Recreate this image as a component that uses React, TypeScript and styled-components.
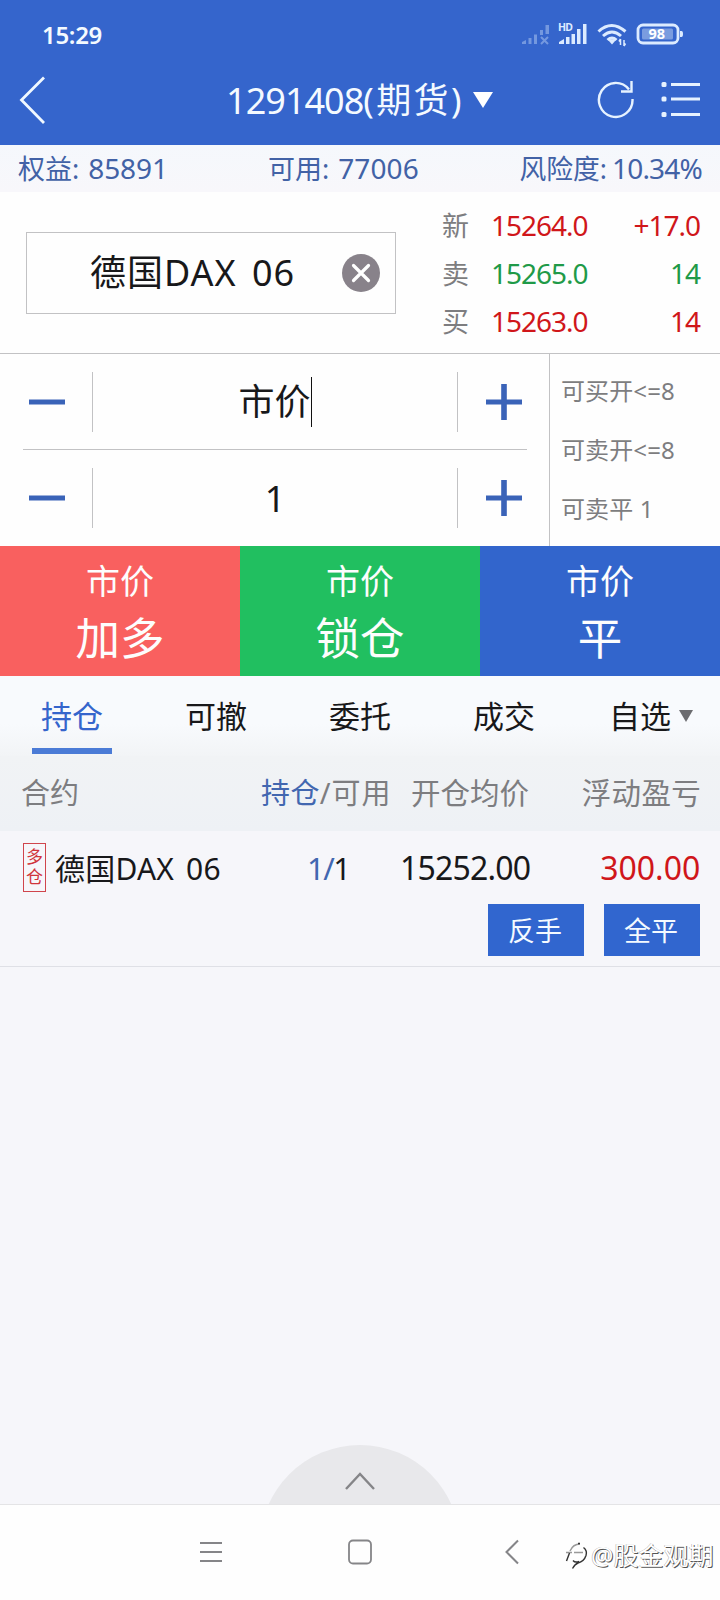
import React from "react";
import styled, { createGlobalStyle } from "styled-components";

const BLUE = "#3565cc";
const RED = "#d0161a";
const GREEN = "#1f9a48";
const GRAY = "#7d7d80";
const LINE = "#c2c2c4";

const GlobalStyle = createGlobalStyle`
  * { box-sizing: border-box; }
  body { margin: 0; background: #f6f6fa; }
`;

const Screen = styled.main`
  width: 720px;
  height: 1600px;
  display: flex;
  flex-direction: column;
  overflow: hidden;
  background: #f6f6fa;
  color: #18181a;
  font-family: "Noto Sans", "Noto Sans CJK SC", sans-serif;
  white-space: nowrap;
`;

const Txt = styled.span<{ $size: number; $track?: number; $word?: number; $color?: string; $weight?: number }>`
  font-size: ${(p) => p.$size}px;
  line-height: ${(p) => Math.round(p.$size * 1.3)}px;
  letter-spacing: ${(p) => p.$track ?? 0}px;
  word-spacing: ${(p) => p.$word ?? 0}px;
  color: ${(p) => p.$color ?? "inherit"};
  font-weight: ${(p) => p.$weight ?? 400};
`;

const Header = styled.header`
  height: 145px;
  background: ${BLUE};
  color: #f4faff;
  flex: none;
`;

const StatusBar = styled.div`
  height: 70px;
  padding: 0 37px 2px 42px;
  display: flex;
  align-items: center;
  justify-content: space-between;
`;

const TitleBar = styled.div`
  height: 60px;
  padding: 0 19px 0 18px;
  display: grid;
  grid-template-columns: 118px 1fr 118px;
  align-items: center;
`;

const Title = styled.h1`
  margin: 0;
  font-weight: 400;
  display: flex;
  align-items: center;
  justify-content: center;
`;

const HeaderTools = styled.div`
  display: flex;
  align-items: center;
  justify-content: flex-end;
  gap: 26px;
`;

const AccountBar = styled.section`
  height: 47px;
  flex: none;
  padding: 0 18px 1px 18px;
  display: grid;
  grid-template-columns: 250px 250px 1fr;
  align-items: center;
  color: #4262a6;
  background: linear-gradient(#f5f8fc, #f8f7fb);
`;

const Figure = styled.div<{ $gap: number; $end?: boolean }>`
  display: flex;
  align-items: center;
  justify-content: ${(p) => (p.$end ? "flex-end" : "flex-start")};
  gap: ${(p) => p.$gap}px;
`;

const QuotePanel = styled.section`
  height: 162px;
  flex: none;
  display: flex;
  align-items: center;
  padding: 0 20px 0 26px;
  background: #fefefe;
  border-bottom: 1px solid ${LINE};
`;

const ContractField = styled.div`
  width: 370px;
  height: 82px;
  padding: 0 15px 0 63px;
  border: 1px solid ${LINE};
  display: flex;
  align-items: center;
  justify-content: space-between;
`;

const QuoteList = styled.div`
  flex: 1;
  margin-left: 46px;
  padding-top: 1px;
  display: grid;
  grid-template-rows: repeat(3, 48px);
`;

const QuoteRow = styled.div<{ $color: string }>`
  display: grid;
  grid-template-columns: 49px 1fr auto;
  align-items: center;
  color: ${(p) => p.$color};
`;

const EntryPanel = styled.section`
  height: 192px;
  flex: none;
  display: flex;
  background: #fefefe;
`;

const Steppers = styled.div`
  width: 549px;
  padding: 0 22px 0 23px;
`;

const Stepper = styled.div`
  height: 96px;
  display: grid;
  grid-template-columns: 69px 1fr 69px;
  align-items: center;
  border-bottom: 1px solid ${LINE};
  & + & { border-bottom: 0; }
`;

const StepValue = styled.div`
  height: 60px;
  border: solid ${LINE};
  border-width: 0 1px;
  display: flex;
  align-items: center;
  justify-content: center;
`;

const Caret = styled.i`
  width: 1px;
  height: 50px;
  background: #111;
`;

const StepButton = styled.button<{ $right?: boolean }>`
  border: 0;
  padding: 0;
  background: none;
  height: 40px;
  display: flex;
  align-items: center;
  justify-content: ${(p) => (p.$right ? "flex-end" : "flex-start")};
  padding-left: ${(p) => (p.$right ? 0 : 6)}px;
  padding-right: ${(p) => (p.$right ? 5 : 0)}px;
`;

const Limits = styled.div`
  flex: 1;
  border-left: 1px solid ${LINE};
  padding: 7px 0 0 11px;
  display: grid;
  grid-template-rows: repeat(3, 59px);
  align-items: center;
`;

const Actions = styled.section`
  height: 130px;
  flex: none;
  display: grid;
  grid-template-columns: repeat(3, 1fr);
`;

const ActionButton = styled.button<{ $bg: string }>`
  border: 0;
  padding: 13px 0 0;
  background: ${(p) => p.$bg};
  color: #fdfdfd;
  font-family: inherit;
  display: flex;
  flex-direction: column;
  align-items: center;
  justify-content: flex-start;
  gap: 6px;
`;

const Tabs = styled.nav`
  height: 80px;
  flex: none;
  display: grid;
  grid-template-columns: repeat(5, 144px);
  background: linear-gradient(#f8fafd 60%, #f2f4f6);
`;

const Tab = styled.div<{ $active?: boolean }>`
  padding-top: 20px;
  display: flex;
  flex-direction: column;
  align-items: center;
  justify-content: space-between;
  color: ${(p) => (p.$active ? BLUE : "inherit")};
`;

const TabLabel = styled.div`
  display: flex;
  align-items: center;
  gap: 8px;
  padding-left: 6px;
`;

const Underline = styled.i`
  width: 80px;
  height: 6px;
  margin-bottom: 2px;
  background: #4b7bd6;
`;

const TableHead = styled.div`
  height: 75px;
  flex: none;
  display: grid;
  grid-template-columns: 240px 150px 117px 1fr;
  padding: 0 19px 1px 21px;
  align-items: center;
  color: ${GRAY};
  background: linear-gradient(#f1f3f5, #eef1f5);
`;

const Cell = styled.div<{ $end?: boolean }>`
  display: flex;
  align-items: center;
  justify-content: ${(p) => (p.$end ? "flex-end" : "flex-start")};
`;

const Position = styled.section`
  height: 136px;
  flex: none;
  padding: 8px 20px 0 23px;
  border-bottom: 1px solid #dfe0e6;
  background: #f6f6fa;
`;

const PositionLine = styled.div`
  height: 58px;
  display: grid;
  grid-template-columns: 32px 252px 93px 1fr 170px;
  align-items: center;
`;

const SideBadge = styled.div`
  width: 23px;
  height: 49px;
  margin-top: -2px;
  border: 1px solid #d0454c;
  color: #d0343b;
  display: flex;
  flex-direction: column;
  align-items: center;
  justify-content: center;
`;

const BadgeChar = styled.span`
  font-size: 17px;
  line-height: 20px;
`;

const RowActions = styled.div`
  margin-top: 7px;
  display: flex;
  justify-content: flex-end;
  gap: 20px;
`;

const RowButton = styled.button`
  width: 96px;
  height: 52px;
  border: 0;
  padding: 1px 2px 0 0;
  background: #3166cf;
  color: #f4faff;
  font-family: inherit;
`;

const Empty = styled.section`
  flex: 1;
  display: flex;
  align-items: flex-end;
  justify-content: center;
`;

const Drawer = styled.div`
  width: 188px;
  height: 59px;
  display: flex;
`;

const NavBar = styled.footer`
  height: 96px;
  flex: none;
  border-top: 1px solid #e4e4e6;
  background: #fefefe;
  padding: 34px 0 0 200px;
  display: grid;
  grid-template-columns: 148px 156px 61px 1fr;
  align-items: start;
`;

const Watermark = styled.div`
  display: flex;
  align-items: center;
  gap: 2px;
  color: #fff;
  text-shadow: 1px 1px 0 #555, -0.5px -0.5px 0 #aaa;
`;

const SignalIcons = () => (
  <svg width="163" height="30" viewBox="520 20 163 30" fill="#dcebff">
    <g opacity=".38">
      <path d="M522 45v-2l4-2v4zM528.5 39h3v6h-3zM534 35.500h3V45h-3zM540 31h3v5h-3zM545.500 26h3.500v9h-3.500z" />
      <path d="m541 38 7 7m0-7-7 7" stroke="#dcebff" strokeWidth="2" />
    </g>
    <text x="558" y="31.500" fontSize="10.500" fontWeight="700" fontFamily="Noto Sans" textLength="15">HD</text>
    <path d="M559 45v-2l5-3v5zM566 38h3.500v7H566zM571.500 35h3.500v10h-3.500zM577 30h3.500v15H577zM583 25h3.500v20H583z" />
    <g fill="none" stroke="#dcebff" strokeWidth="3">
      <path d="M598.500 32.500q13-12 27 0M603 37q9-8 18 0M607.500 41q4.500-4 9 0" />
    </g>
    <path d="m608.500 41.500 3.500 4 3.500-4q-3.500-2.500-7 0z" />
    <path d="M620.500 40v6m0-6-1.500 2.500M624 41v6m0 0 1.500-2.500" stroke="#dcebff" strokeWidth="1.500" fill="none" />
    <rect x="638" y="26" width="40" height="18" rx="5" fill="none" stroke="#dcebff" strokeWidth="2.800" />
    <rect x="642" y="29.500" width="31" height="11" rx="1.500" fill="#7a9cdf" />
    <path d="M680 32h1.500q1.500 0 1.500 3t-1.500 3H680z" />
    <text x="648.500" y="40" fontSize="14.500" fontWeight="700" fontFamily="Noto Sans" fill="#fff">98</text>
  </svg>
);

const BackIcon = () => (
  <svg width="28" height="50" viewBox="0 0 28 50" fill="none" stroke="#f0f8ff" strokeWidth="2.800">
    <path d="M26 2.500 3.500 25 26 48" />
  </svg>
);

const RefreshIcon = () => (
  <svg width="38" height="40" viewBox="596 80 38 40" fill="none" stroke="#e6f2ff" strokeWidth="2.400">
    <path d="M631.500 99A16.800 17 0 1 1 628 89.500" />
    <path d="M630.500 81v10.500H620" />
  </svg>
);

const ListIcon = () => (
  <svg width="40" height="40" viewBox="661 80 40 40" fill="#e6f2ff">
    {[82.500, 97, 112.500].map((y) => (
      <g key={y}>
        <rect x="661.500" y={y - 0.500} width="5" height="5" rx="1.500" />
        <rect x="671" y={y + 0.500} width="29" height="3" />
      </g>
    ))}
  </svg>
);

const Triangle = styled.i<{ $w: number; $h: number; $color: string; $space?: number }>`
  margin-left: ${(p) => p.$space ?? 0}px;
  border: solid transparent;
  border-width: ${(p) => p.$h}px ${(p) => p.$w / 2}px 0;
  border-top-color: ${(p) => p.$color};
`;

const ClearIcon = () => (
  <svg width="38" height="38" viewBox="0 0 38 38">
    <circle cx="19" cy="19" r="19" fill="#88828a" />
    <path d="m11.500 11.500 15 15m0-15-15 15" stroke="#fff" strokeWidth="3.200" strokeLinecap="round" />
  </svg>
);

const Sign = ({ plus }: { plus?: boolean }) => (
  <svg width="36" height="36" viewBox="0 0 36 36" fill="#3a63b8">
    <rect y="15.500" width="36" height="5" />
    {plus && <rect x="15.200" width="5.600" height="36" />}
  </svg>
);

const quotes = [
  { label: "新", price: "15264.0", side: "+17.0", color: RED },
  { label: "卖", price: "15265.0", side: "14", color: GREEN },
  { label: "买", price: "15263.0", side: "14", color: RED },
];

const actions = [
  { name: "加多", bg: "#f9605f" },
  { name: "锁仓", bg: "#21bf60" },
  { name: "平", bg: "#3265cc" },
];

export default function App() {
  return (
    <Screen>
      <GlobalStyle />
      <Header>
        <StatusBar>
          <Txt $size={24} $weight={600} $track={-0.3}>15:29</Txt>
          <SignalIcons />
        </StatusBar>
        <TitleBar>
          <BackIcon />
          <Title>
            <Txt $size={36} $track={-1}>1291408</Txt>
            <Txt $size={35} $track={2.4}>(期货)</Txt>
            <Triangle $w={20} $h={16} $color="#fff" $space={9} />
          </Title>
          <HeaderTools>
            <RefreshIcon />
            <ListIcon />
          </HeaderTools>
        </TitleBar>
      </Header>

      <AccountBar>
        <Figure $gap={9}>
          <Txt $size={27}>权益:</Txt>
          <Txt $size={28} $track={-0.1}>85891</Txt>
        </Figure>
        <Figure $gap={9}>
          <Txt $size={27}>可用:</Txt>
          <Txt $size={28} $track={0.1}>77006</Txt>
        </Figure>
        <Figure $gap={5} $end>
          <Txt $size={26.8}>风险度:</Txt>
          <Txt $size={28} $track={-0.8}>10.34%</Txt>
        </Figure>
      </AccountBar>

      <QuotePanel>
        <ContractField>
          <Txt $size={36} $track={1} $word={5}>德国DAX 06</Txt>
          <ClearIcon />
        </ContractField>
        <QuoteList>
          {quotes.map((q) => (
            <QuoteRow key={q.label} $color={q.color}>
              <Txt $size={27} $color={GRAY}>{q.label}</Txt>
              <Txt $size={28} $track={-1}>{q.price}</Txt>
              <Txt $size={28} $track={-1}>{q.side}</Txt>
            </QuoteRow>
          ))}
        </QuoteList>
      </QuotePanel>

      <EntryPanel>
        <Steppers>
          <Stepper>
            <StepButton aria-label="减价"><Sign /></StepButton>
            <StepValue>
              <Txt $size={36}>市价</Txt>
              <Caret />
            </StepValue>
            <StepButton $right aria-label="加价"><Sign plus /></StepButton>
          </Stepper>
          <Stepper>
            <StepButton aria-label="减量"><Sign /></StepButton>
            <StepValue><Txt $size={36}>1</Txt></StepValue>
            <StepButton $right aria-label="加量"><Sign plus /></StepButton>
          </Stepper>
        </Steppers>
        <Limits>
          {["可买开<=8", "可卖开<=8", "可卖平 1"].map((t) => (
            <Txt key={t} $size={24} $track={0.1} $color={GRAY}>{t}</Txt>
          ))}
        </Limits>
      </EntryPanel>

      <Actions>
        {actions.map((a) => (
          <ActionButton key={a.name} $bg={a.bg}>
            <Txt $size={34}>市价</Txt>
            <Txt $size={44.5}>{a.name}</Txt>
          </ActionButton>
        ))}
      </Actions>

      <Tabs>
        <Tab $active>
          <Txt $size={31}>持仓</Txt>
          <Underline />
        </Tab>
        {["可撤", "委托", "成交"].map((t) => (
          <Tab key={t}><Txt $size={31}>{t}</Txt></Tab>
        ))}
        <Tab>
          <TabLabel>
            <Txt $size={31}>自选</Txt>
            <Triangle $w={15} $h={12} $color="#6c6c70" />
          </TabLabel>
        </Tab>
      </Tabs>

      <TableHead>
        <Cell><Txt $size={29}>合约</Txt></Cell>
        <Cell>
          <Txt $size={29} $track={0.4} $color="#4267b0">持仓</Txt>
          <Txt $size={29} $track={1}>/可用</Txt>
        </Cell>
        <Cell><Txt $size={29.500}>开仓均价</Txt></Cell>
        <Cell $end><Txt $size={29.500} $track={0.3}>浮动盈亏</Txt></Cell>
      </TableHead>

      <Position>
        <PositionLine>
          <SideBadge>
            <BadgeChar>多</BadgeChar>
            <BadgeChar>仓</BadgeChar>
          </SideBadge>
          <Txt $size={30} $track={0.2} $word={4}>德国DAX 06</Txt>
          <Txt $size={31} $track={-2.4}><Txt $size={31} $track={-1.5} $color="#4267b0">1/</Txt>1</Txt>
          <Txt $size={32} $track={-0.800}>15252.00</Txt>
          <Cell $end><Txt $size={32} $track={0} $color={RED}>300.00</Txt></Cell>
        </PositionLine>
        <RowActions>
          <RowButton><Txt $size={27}>反手</Txt></RowButton>
          <RowButton><Txt $size={27}>全平</Txt></RowButton>
        </RowActions>
      </Position>

      <Empty>
        <Drawer>
          <svg width="188" height="59" viewBox="0 0 188 59">
            <circle cx="94" cy="100" r="100" fill="#e8e8eb" />
            <path d="m80 44 14-15 14 15" fill="none" stroke="#858588" strokeWidth="2.400" />
          </svg>
        </Drawer>
      </Empty>

      <NavBar>
        <svg width="22" height="24" viewBox="0 0 22 24" stroke="#858588" strokeWidth="1.800">
          <path d="M0 4h22M0 13h22M0 22h22" />
        </svg>
        <svg width="24" height="26" viewBox="0 0 24 26" fill="none" stroke="#858588" strokeWidth="1.800">
          <rect x="1" y="1.500" width="22" height="23" rx="4" />
        </svg>
        <svg width="16" height="26" viewBox="0 0 16 26" fill="none" stroke="#858588" strokeWidth="2">
          <path d="M14 1.500 2.500 13 14 24.500" />
        </svg>
        <Watermark>
          <svg width="24" height="30" viewBox="0 0 24 30" fill="none" strokeWidth="1.400">
            <path d="M5 10Q8 3 15 3M1 11.500h6M9 11.500h9" stroke="#999" />
            <path d="M13 2.500h2M1.500 20 4.500 12M18.500 6.500q4 3 2.500 8-2 6-8 7.500-3 1-5.500 5.500M8 19.500q2 2.500 6 1" stroke="#333" />
          </svg>
          <Txt $size={25}>@股金观期</Txt>
        </Watermark>
      </NavBar>
    </Screen>
  );
}
